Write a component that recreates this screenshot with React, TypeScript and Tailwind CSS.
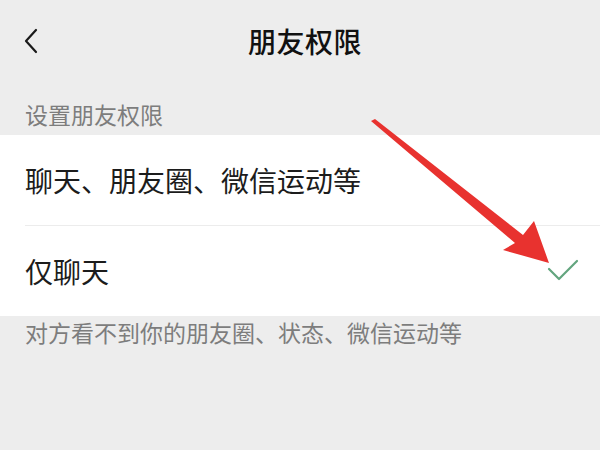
import React from "react";

const font = { fontFamily: '"Noto Sans CJK SC", "Noto Sans", sans-serif' };

function BackIcon() {
    return (
        <svg width="16" height="26" viewBox="0 0 16 26" className="text-[#1a1a1a]">
            <path d="M13 2 L3 13 L13 24" fill="none" stroke="currentColor" strokeWidth="2.2" strokeLinecap="round" strokeLinejoin="round" />
        </svg>
    );
}

function Check() {
    return (
        <svg width="34" height="26" viewBox="0 0 34 26">
            <path d="M3 11 L13 21 L31 3" fill="none" stroke="#62a57e" strokeWidth="2.2" strokeLinecap="round" strokeLinejoin="round" />
        </svg>
    );
}

function Arrow() {
    // red pointer drawn over the screenshot
    return (
        <svg className="absolute left-0 top-0 pointer-events-none" width="600" height="450" viewBox="0 0 600 450">
            <polygon points="371,121 375,119 523,235 534,221 549,263 503,250 515,243" fill="#e8322f" />
        </svg>
    );
}

export default function App() {
    return (
        <div className="relative w-[600px] h-[450px] bg-[#ededed] overflow-hidden" style={font}>
            <div className="relative h-[82px] flex items-center justify-center">
                <div className="absolute left-[23px] top-[28px]">
                    <BackIcon />
                </div>
                <h1 className="pl-[10px] text-[28px] leading-[36px] font-medium text-[#111] tracking-[0.5px]">朋友权限</h1>
            </div>
            <p className="pl-[25px] pt-[17px] pb-[6px] text-[23px] leading-[30px] text-[#7d7d7d]">设置朋友权限</p>
            <div className="bg-white">
                <div className="h-[90px] flex items-center pl-[25px] text-[28px] text-[#1c1c1c]">
                    聊天、朋友圈、微信运动等
                </div>
                <div className="ml-[25px] border-t border-[#ececec]" />
                <div className="h-[90px] flex items-center justify-between pl-[25px] pr-[20px] text-[28px] text-[#1c1c1c]">
                    <span>仅聊天</span>
                    <Check />
                </div>
            </div>
            <p className="pl-[25px] pt-[1px] text-[23px] leading-[30px] text-[#7d7d7d]">对方看不到你的朋友圈、状态、微信运动等</p>
            <Arrow />
        </div>
    );
}
